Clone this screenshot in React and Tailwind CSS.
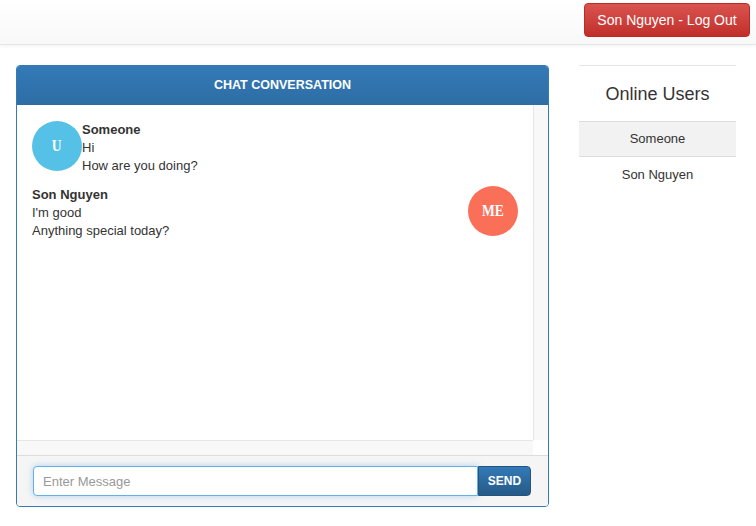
// Chat room screen: top navbar, chat panel, online users list
const messages = [
  { id: 1, name: 'Someone', lines: ['Hi', 'How are you doing?'], mine: false },
  { id: 2, name: 'Son Nguyen', lines: ["I'm good", 'Anything special today?'], mine: true },
];

const users = ['Someone', 'Son Nguyen'];

function Avatar({ label, mine }) {
  return (
    <div
      className={`flex h-[50px] w-[50px] shrink-0 items-center justify-center rounded-full text-[16px] font-bold text-white ${
        mine ? 'bg-[#fa6f57]' : 'bg-[#55c1e7]'
      }`}
      style={{ fontFamily: '"Liberation Serif", serif' }}
    >
      <span className="inline-block scale-x-[0.85]">{label}</span>
    </div>
  );
}

function Message({ msg }) {
  return (
    <div className="mb-[11px] flex items-start">
      {!msg.mine && <Avatar label="U" mine={false} />}
      <div className="flex-1 leading-[18px]">
        <div className="font-bold">{msg.name}</div>
        {msg.lines.map((l) => (
          <div key={l}>{l}</div>
        ))}
      </div>
      {msg.mine && <Avatar label="ME" mine />}
    </div>
  );
}

export default function App() {
  return (
    <div
      className="min-h-[526px] w-[756px] bg-white text-[13px] text-[#333]"
      style={{ fontFamily: '"Liberation Sans", Arial, sans-serif' }}
    >
      {/* navbar */}
      <div className="flex h-[45px] justify-end border-b border-[#e7e7e7] bg-gradient-to-b from-white to-[#f8f8f8] pr-[6px] pt-[3px] shadow-[0_1px_4px_rgba(0,0,0,0.06)]">
        <button className="h-[34px] w-[166px] rounded-[4px] border border-[#b92c28] bg-gradient-to-b from-[#d9534f] to-[#c12e2a] text-[14px] text-white">
          Son Nguyen - Log Out
        </button>
      </div>

      <div className="flex pl-[16px] pt-[20px]">
        {/* chat panel */}
        <div className="flex h-[442px] w-[533px] flex-col overflow-hidden rounded-[4px] border border-[#337ab7]">
          <div className="flex h-[39px] shrink-0 items-center justify-center bg-gradient-to-b from-[#337ab7] to-[#2e6da4] text-[12.5px] font-bold text-white">
            CHAT CONVERSATION
          </div>
          <div className="flex h-[350px] flex-col">
            <div className="flex flex-1">
              <div className="flex-1 px-[15px] pt-[16px]">
                {messages.map((m) => (
                  <Message key={m.id} msg={m} />
                ))}
              </div>
              <div className="w-[15px] border-l border-[#e6e6e6] bg-[#f8f8f8]" />
            </div>
            <div className="flex h-[15px]">
              <div className="flex-1 border-t border-[#e6e6e6] bg-[#f8f8f8]" />
              <div className="w-[15px] bg-white" />
            </div>
          </div>
          <div className="flex flex-1 items-start border-t border-[#dddddd] bg-[#f5f5f5] pl-[16px] pr-[17px] pt-[10px]">
            <input
              placeholder="Enter Message"
              className="h-[30px] flex-1 rounded-l-[4px] border border-[#66afe9] bg-white px-[9px] text-[13px] shadow-[0_0_6px_rgba(102,175,233,0.5)] outline-none placeholder:text-[#999]"
            />
            <button className="h-[30px] w-[53px] rounded-r-[4px] border border-[#245580] bg-gradient-to-b from-[#337ab7] to-[#265a88] text-[12px] font-bold text-white">
              SEND
            </button>
          </div>
        </div>

        {/* online users */}
        <div className="ml-[30px] w-[157px]">
          <div className="border-t border-[#e5e5e5] pb-[17px] pt-[18px] text-center text-[18px] font-medium leading-[20px] text-[#333]">
            Online Users
          </div>
          <div className="border-t border-[#dddddd]">
            {users.map((u, i) => (
              <div
                key={u}
                className={`flex h-[35px] items-center justify-center ${
                  i === 0 ? 'border-b border-[#dddddd] bg-[#f2f2f2]' : ''
                }`}
              >
                {u}
              </div>
            ))}
          </div>
        </div>
      </div>
    </div>
  );
}
